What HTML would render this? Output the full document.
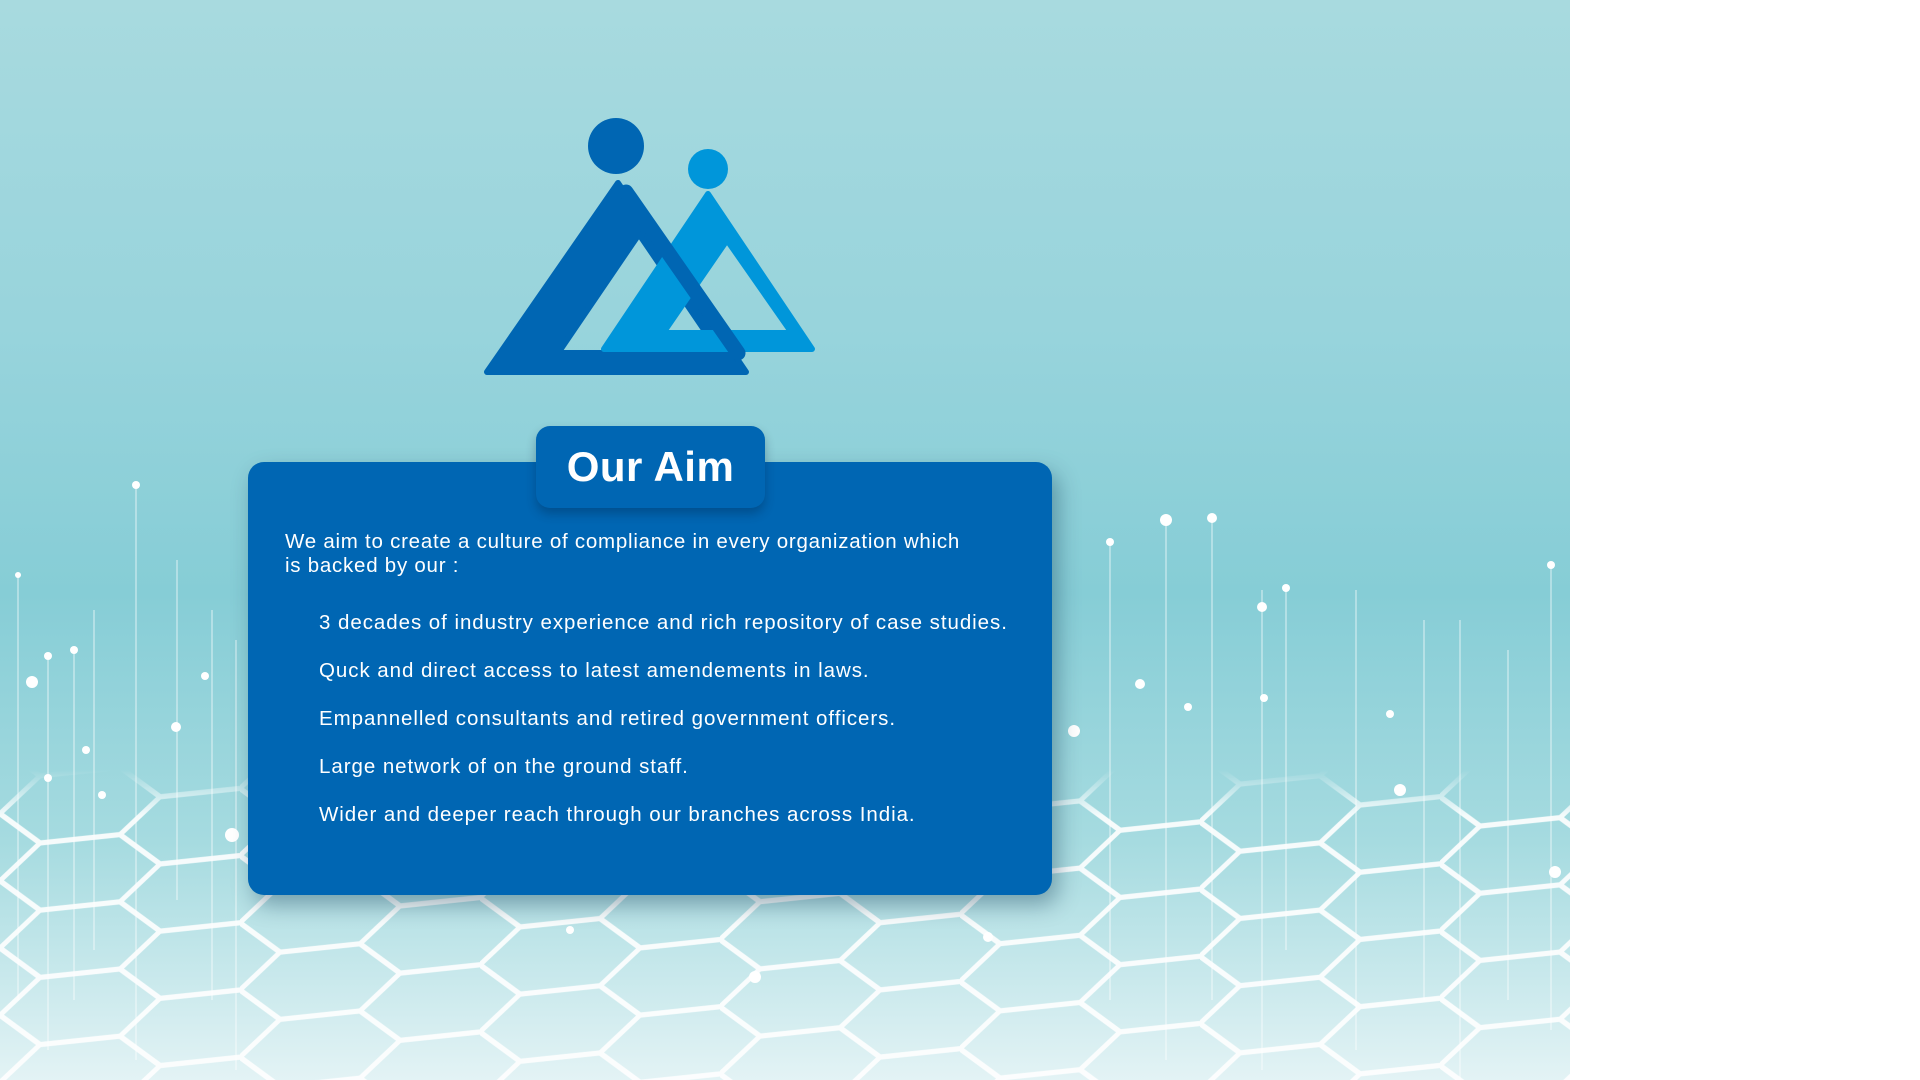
<!DOCTYPE html>
<html><head><meta charset="utf-8"><style>
html,body{margin:0;padding:0;width:1920px;height:1080px;overflow:hidden;background:#fff;font-family:"Liberation Sans",sans-serif}
#bg{position:absolute;left:0;top:0;width:1570px;height:1080px;background:linear-gradient(180deg,#a8dadf 0%,#98d4dc 30%,#86cdd6 55%,#a6dbe0 78%,#e3f3f5 100%)}
.card{position:absolute;left:248px;top:462px;width:804px;height:433px;background:#0066b3;border-radius:16px;box-shadow:6px 10px 22px rgba(0,40,70,.35)}
.tab{position:absolute;left:536px;top:426px;width:229px;height:82px;background:#0066b3;border-radius:14px;box-shadow:0 6px 10px rgba(0,30,60,.3);color:#fff;font-weight:bold;font-size:42px;text-align:center;line-height:82px;letter-spacing:0.5px}
.intro{position:absolute;left:285px;top:530px;width:690px;color:#fff;font-size:20.5px;line-height:24px;letter-spacing:0.75px}
.li{position:absolute;left:319px;color:#fff;font-size:20.5px;letter-spacing:0.95px}
</style></head><body>
<div id="bg">
<svg width="1570" height="1080" style="position:absolute;left:0;top:0">
<defs>
<pattern id="hx" width="240" height="64" patternUnits="userSpaceOnUse" patternTransform="translate(0,780) skewY(-6) scale(1,1.05)">
<path d="M0 32 L40 0 L120 0 L160 32 L120 64 L40 64 Z M160 32 L240 32" fill="none" stroke="#fff" stroke-width="5"/>
</pattern>
<linearGradient id="fade" x1="0" y1="0" x2="0" y2="1"><stop offset="0" stop-color="#fff" stop-opacity="0"/><stop offset="0.15" stop-color="#fff" stop-opacity="1"/></linearGradient>
<mask id="m"><rect x="0" y="770" width="1570" height="310" fill="url(#fade)"/></mask>
</defs>
<rect x="0" y="770" width="1570" height="310" fill="url(#hx)" mask="url(#m)" opacity="0.9"/>
<g stroke="#fff" stroke-width="1.2" opacity="0.6">
<line x1="18" y1="575" x2="18" y2="1000"/><line x1="48" y1="660" x2="48" y2="1050"/><line x1="74" y1="650" x2="74" y2="1000"/><line x1="94" y1="610" x2="94" y2="950"/><line x1="136" y1="485" x2="136" y2="1060"/><line x1="177" y1="560" x2="177" y2="900"/><line x1="212" y1="610" x2="212" y2="1000"/><line x1="236" y1="640" x2="236" y2="1070"/>
<line x1="1110" y1="540" x2="1110" y2="1000"/><line x1="1166" y1="520" x2="1166" y2="1060"/><line x1="1212" y1="520" x2="1212" y2="1000"/><line x1="1262" y1="590" x2="1262" y2="1070"/><line x1="1286" y1="590" x2="1286" y2="950"/><line x1="1356" y1="590" x2="1356" y2="1050"/><line x1="1424" y1="620" x2="1424" y2="1000"/><line x1="1460" y1="620" x2="1460" y2="1080"/><line x1="1508" y1="650" x2="1508" y2="1000"/><line x1="1551" y1="565" x2="1551" y2="1030"/>
</g>
<g fill="#fff">
<circle cx="136" cy="485" r="4"/><circle cx="18" cy="575" r="3"/><circle cx="32" cy="682" r="6"/><circle cx="48" cy="656" r="4"/><circle cx="74" cy="650" r="4"/><circle cx="176" cy="727" r="5"/><circle cx="205" cy="676" r="4"/><circle cx="86" cy="750" r="4"/><circle cx="102" cy="795" r="4"/><circle cx="232" cy="835" r="7"/><circle cx="48" cy="778" r="4"/>
<circle cx="1166" cy="520" r="6"/><circle cx="1212" cy="518" r="5"/><circle cx="1262" cy="607" r="5"/><circle cx="1286" cy="588" r="4"/><circle cx="1110" cy="542" r="4"/><circle cx="1074" cy="731" r="6"/><circle cx="1140" cy="684" r="5"/><circle cx="1188" cy="707" r="4"/><circle cx="1400" cy="790" r="6"/><circle cx="1551" cy="565" r="4"/><circle cx="1555" cy="872" r="6"/><circle cx="1264" cy="698" r="4"/><circle cx="1390" cy="714" r="4"/>
<circle cx="755" cy="977" r="6"/><circle cx="988" cy="937" r="5"/><circle cx="570" cy="930" r="4"/>
</g>
</svg>
<svg width="1570" height="1080" style="position:absolute;left:0;top:0">
<g stroke-linejoin="round" stroke-width="6">
<path d="M618 183 L487 372 L746 372 Z M639 234 L558 353 L720 353 Z" fill="#0066b3" fill-rule="evenodd" stroke="#0066b3"/>
<circle cx="616" cy="146" r="28" fill="#0066b3"/>
<path d="M708 194 L604 349 L812 349 Z M727 240 L663 333 L792 333 Z" fill="#0096da" fill-rule="evenodd" stroke="#0096da"/>
<path d="M626 192 L738 353" stroke="#0066b3" stroke-width="15" stroke-linecap="round" fill="none"/>
<circle cx="708" cy="169" r="20" fill="#0096da"/>
</g>
</svg>
</div>
<div class="card"></div>
<div class="tab">Our Aim</div>
<div class="intro">We aim to create a culture of compliance in every organization which is backed by our :</div>
<div class="li" style="top:611px">3 decades of industry experience and rich repository of case studies.</div>
<div class="li" style="top:659px">Quck and direct access to latest amendements in laws.</div>
<div class="li" style="top:707px">Empannelled consultants and retired government officers.</div>
<div class="li" style="top:755px">Large network of on the ground staff.</div>
<div class="li" style="top:803px">Wider and deeper reach through our branches across India.</div>
</body></html>
